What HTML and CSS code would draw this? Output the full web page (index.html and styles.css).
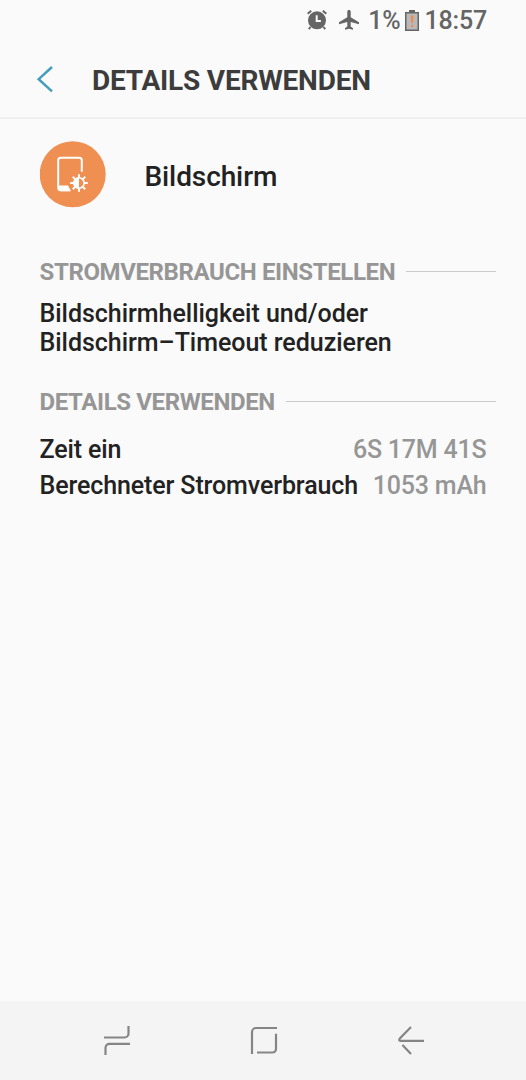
FILE: index.html
```html
<!DOCTYPE html>
<html lang="de">
<head>
    <meta charset="UTF-8">
    <meta name="viewport" content="width=device-width, initial-scale=1.0">
    <title>Details verwenden</title>
    <link rel="stylesheet" href="styles.css">
</head>
<body>
    <!-- Status Bar -->
    <div class="status-bar">
        <svg class="status-alarm" width="20" height="20" viewBox="0 0 20 20">
            <circle cx="10" cy="10.3" r="9"/>
            <path class="alarm-lines" d="M0.7 3.8 4.2 0.8M19.3 3.8 15.8 0.8M3.5 17 1.8 19.2M16.5 17l1.7 2.2"/>
            <path class="alarm-hands" d="M9.7 5.2v5.9h4.2"/>
        </svg>
        <svg class="status-plane" width="20" height="20" viewBox="0 0 20 20">
            <path d="M10 0c-1 0-1.700.7-1.700 1.600v5.600L0 12.300v2l8.300-2.300v4.600l-2.300 1.600v1.600l4-1 4 1v-1.600l-2.300-1.600V12l8.300 2.300v-2l-8.300-5.100V1.600C11.700.7 11 0 10 0z"/>
        </svg>
        <span class="battery-level">1%</span>
        <svg class="status-battery" width="14" height="21" viewBox="0 0 14 21">
            <path class="battery-case" d="M4 0h6v2h4v19H0V2h4z"/>
            <path class="battery-inner" d="M1.500 3.500h11v16h-11z"/>
            <path class="battery-alert" d="M5.800 5.500h2.600l-.3 7.500H6.200zM6 14.700h2.200v2.200H6z"/>
        </svg>
        <span class="clock">18:57</span>
    </div>

    <!-- Header -->
    <header class="header">
        <svg class="back-icon" width="18" height="28" viewBox="0 0 18 28">
            <path d="M16 2 2.700 14.200 16 26.400"/>
        </svg>
        <h1 class="header-title">DETAILS VERWENDEN</h1>
    </header>

    <main class="content">
        <div class="app-row">
            <svg class="app-icon" width="66" height="67" viewBox="0 0 66 67">
                <circle class="app-circle" cx="32.700" cy="33.300" r="33"/>
                <path class="app-phone" d="M41.800 30.800V19.200a2.500 2.500 0 0 0-2.500-2.500H20.700a2.500 2.500 0 0 0-2.500 2.500v27.600a2.500 2.500 0 0 0 2.500 2.500h9"/>
                <path class="app-fill" d="M18.500 44.500H28l3 5.800H20.500a2 2 0 0 1-2-2z"/>
                <circle class="app-sun" cx="39" cy="42" r="5.200"/>
                <path class="app-fill" d="M39 36.200a5.800 5.800 0 0 0 0 11.600z"/>
                <path class="app-rays" d="M39 36.500v-3.300M39 47.500v3.300M33.500 42h-3.300M44.500 42h3.300M35.100 38.100l-2.300-2.300M42.900 38.100l2.300-2.300M35.100 45.900l-2.300 2.300M42.900 45.900l2.300 2.300"/>
            </svg>
            <span class="app-name">Bildschirm</span>
        </div>

        <!-- Power saving tips -->
        <div class="section-header">
            <h2 class="section-title">STROMVERBRAUCH EINSTELLEN</h2>
            <div class="section-line"></div>
        </div>
        <p class="tip">Bildschirmhelligkeit und/oder<br>Bildschirm–Timeout reduzieren</p>

        <!-- Usage details -->
        <div class="section-header">
            <h2 class="section-title">DETAILS VERWENDEN</h2>
            <div class="section-line"></div>
        </div>
        <div class="details">
            <div class="detail-row">
                <span>Zeit ein</span>
                <span class="detail-value">6S 17M 41S</span>
            </div>
            <div class="detail-row">
                <span>Berechneter Stromverbrauch</span>
                <span class="detail-value">1053 mAh</span>
            </div>
        </div>
    </main>

    <!-- Navigation Bar -->
    <nav class="nav-bar">
        <svg width="28" height="32" viewBox="0 0 28 32">
            <path d="M1 13.500h20.500a4 4 0 0 0 4-4V2M27 19.800H6.500a4 4 0 0 0-4 4V31"/>
        </svg>
        <svg width="28" height="32" viewBox="0 0 28 32">
            <path d="M2 30V8a4 4 0 0 1 4-4h21M26 9.800v15.200a3.500 3.500 0 0 1-3.500 3.500H7"/>
        </svg>
        <svg width="28" height="32" viewBox="0 0 28 32">
            <path d="M14 3 2.800 14.500Q1.300 16.800 3.500 16.800H27M5.500 21l8.500 9"/>
        </svg>
    </nav>
</body>
</html>
```

FILE: styles.css
```css
* {
    margin: 0;
    padding: 0;
    box-sizing: border-box;
}

body {
    height: 1080px;
    display: flex;
    flex-direction: column;
    background-color: #fafafa;
    color: #222;
    font-family: Roboto, "Liberation Sans", sans-serif;
    font-weight: 500;
    overflow: hidden;
}

svg {
    display: block;
    flex-shrink: 0;
}

.status-bar {
    height: 42px;
    padding-right: 39px;
    display: flex;
    justify-content: flex-end;
    align-items: center;
    color: #656565;
    fill: #656565;
    font-size: 25px;
    letter-spacing: -0.2px;
    line-height: 42px;
}

.status-alarm,
.status-plane {
    margin-bottom: 2px;
}

.status-plane {
    margin-left: 12px;
    margin-right: 9px;
}

.status-battery {
    margin: 0 6px 2px 4px;
}

.alarm-lines,
.alarm-hands {
    fill: none;
    stroke: #656565;
    stroke-width: 2;
}

.alarm-hands {
    stroke: #fafafa;
}

.battery-inner {
    fill: #b9b9b9;
}

.battery-alert {
    fill: #f5894b;
}

.header {
    height: 77px;
    padding-left: 36px;
    display: flex;
    align-items: center;
    border-bottom: 2px solid #f0f0f0;
}

.back-icon {
    margin-right: 38px;
    margin-bottom: 2px;
    fill: none;
    stroke: #459dbd;
    stroke-width: 2.5;
}

.header-title {
    padding-top: 2px;
    color: #3c3c3c;
    font-size: 28px;
    font-weight: 700;
    letter-spacing: -0.2px;
}

.content {
    flex: 1;
    padding: 22px 30px 0 39.500px;
}

.app-row {
    height: 67px;
    margin-bottom: 50px;
    display: flex;
    align-items: center;
}

.app-circle {
    fill: #ef8f52;
}

.app-phone,
.app-sun,
.app-rays {
    fill: none;
    stroke: #fff;
    stroke-width: 2;
}

.app-sun {
    fill: #ef8f52;
    stroke-width: 1.6;
}

.app-fill {
    fill: #fff;
}

.app-name {
    margin-left: 39px;
    padding-top: 3px;
    font-size: 28px;
    letter-spacing: -0.1px;
}

.section-header {
    height: 28px;
    display: flex;
    align-items: center;
}

.section-title {
    color: #969696;
    font-size: 24px;
    font-weight: 700;
    letter-spacing: -0.38px;
    line-height: 28px;
    white-space: nowrap;
}

.section-line {
    flex: 1;
    height: 1px;
    margin-left: 11px;
    margin-bottom: 1px;
    background-color: #cbcbcb;
}

.tip {
    margin: 13px 0 31px;
    font-size: 25px;
    letter-spacing: -0.03px;
    line-height: 29px;
}

.details {
    padding: 16px 9.500px 0 0;
    font-size: 25px;
    letter-spacing: -0.11px;
    line-height: 36px;
}

.detail-row {
    display: flex;
    justify-content: space-between;
}

.detail-value {
    color: #969696;
    letter-spacing: -0.2px;
}

.nav-bar {
    height: 79px;
    padding: 0 101px 2px 103px;
    display: flex;
    justify-content: space-between;
    align-items: center;
    background-color: #f4f4f4;
    fill: none;
    stroke: #858585;
    stroke-width: 2.2;
}
```
